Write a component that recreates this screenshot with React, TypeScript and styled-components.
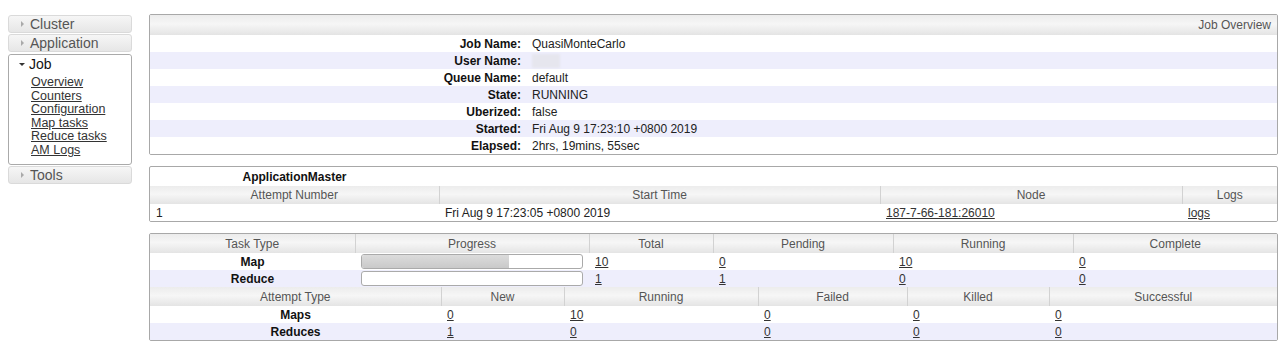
import React from "react";
import styled, { createGlobalStyle } from "styled-components";

const Global = createGlobalStyle`
  html, body { margin: 0; padding: 0; background: #fff; }
  body { font-family: "Liberation Sans", Arial, sans-serif; font-size: 12px; color: #222; }
`;

const Page = styled.div`
  display: flex;
  align-items: flex-start;
  padding: 14px 3px 0 8px;
  gap: 17px;
`;

const Nav = styled.nav`
  width: 124px;
  flex: none;
  display: flex;
  flex-direction: column;
  gap: 1px;
  margin-top: 1px;
`;

const NavHead = styled.div<{ $open?: boolean }>`
  height: 18px;
  box-sizing: border-box;
  border: 1px solid ${(p) => (p.$open ? "transparent" : "#dadada")};
  border-radius: 3px;
  background: ${(p) => (p.$open ? "#fff" : "linear-gradient(#f6f6f6, #e6e6e6)")};
  color: ${(p) => (p.$open ? "#111" : "#555")};
  font-size: 14px;
  line-height: 16px;
  display: flex;
  align-items: center;
  padding-left: ${(p) => (p.$open ? "8px" : "10px")};
  gap: ${(p) => (p.$open ? "4px" : "6px")};
`;

const Tri = styled.span<{ $down?: boolean }>`
  width: 0;
  height: 0;
  ${(p) =>
    p.$down
      ? `border-left: 3px solid transparent; border-right: 3px solid transparent; border-top: 3px solid #333; margin-left: 1px;`
      : `border-top: 3px solid transparent; border-bottom: 3px solid transparent; border-left: 3px solid #aaa; margin-left: 2px;`}
`;

const NavBox = styled.div`
  border: 1px solid #aaa;
  border-radius: 3px;
  padding-bottom: 6px;
  margin-top: 1px;
`;

const NavLinks = styled.ul`
  list-style: none;
  margin: 3px 0 0;
  padding: 0 0 0 22px;
  display: flex;
  flex-direction: column;
`;

const NavItem = styled.li`
  height: 13.6px;
  line-height: 13.6px;
`;

const NavLink = styled.a`
  color: #333;
  text-decoration: underline;
  font-size: 12.5px;
`;

const Main = styled.main`
  flex: 1;
  display: flex;
  flex-direction: column;
  gap: 11px;
`;

const Box = styled.div`
  border: 1px solid #a8a8a8;
  border-radius: 2px;
  overflow: hidden;
`;

const Table = styled.table`
  width: 100%;
  border-collapse: collapse;
  table-layout: fixed;
`;

const HeadCell = styled.th<{ $align?: string; $h?: number }>`
  height: ${(p) => p.$h || 18}px;
  padding: 0 6px;
  font-weight: normal;
  color: #555;
  text-align: ${(p) => p.$align || "center"};
  background: linear-gradient(#ececec, #f6f6f6 45%, #e4e4e4);
  border-left: 1px solid #d2d2d2;
  &:first-child { border-left: none; }
  white-space: nowrap;
`;

const Row = styled.tr<{ $alt?: boolean }>`
  background: ${(p) => (p.$alt ? "#eeeefc" : "#fff")};
`;

const Label = styled.th<{ $center?: boolean; $h?: number }>`
  height: ${(p) => p.$h || 17}px;
  padding: 0 5px;
  text-align: ${(p) => (p.$center ? "center" : "right")};
  font-weight: bold;
  color: #111;
  white-space: nowrap;
`;

const Cell = styled.td`
  height: 17px;
  padding: 0 6px;
  text-align: left;
  white-space: nowrap;
  color: #222;
`;

const Link = styled.a`
  color: #333;
  text-decoration: underline;
`;

const Blur = styled.span`
  display: inline-block;
  width: 28px;
  height: 14px;
  vertical-align: middle;
  background: #e6e6ee;
  filter: blur(1px);
`;

const Bar = styled.div`
  height: 15px;
  box-sizing: border-box;
  border: 1px solid #aaa;
  border-radius: 3px;
  background: #fff;
  overflow: hidden;
`;

const BarFill = styled.div`
  height: 100%;
  background: linear-gradient(#dcdcdc, #c9c9c9);
`;

const Cols = ({ widths }: { widths: number[] }) => (
  <colgroup>
    {widths.map((w, i) => (
      <col key={i} style={{ width: w }} />
    ))}
  </colgroup>
);

const overview: [string, React.ReactNode][] = [
  ["Job Name:", "QuasiMonteCarlo"],
  ["User Name:", <Blur />],
  ["Queue Name:", "default"],
  ["State:", "RUNNING"],
  ["Uberized:", "false"],
  ["Started:", "Fri Aug 9 17:23:10 +0800 2019"],
  ["Elapsed:", "2hrs, 19mins, 55sec"],
];

const tasks = [
  { name: "Map", progress: 66.7, total: "10", pending: "0", running: "10", complete: "0" },
  { name: "Reduce", progress: 0, total: "1", pending: "1", running: "0", complete: "0" },
];

const attempts = [
  { name: "Maps", v: ["0", "10", "0", "0", "0"] },
  { name: "Reduces", v: ["1", "0", "0", "0", "0"] },
];

export default function App() {
  return (
    <>
      <Global />
      <Page>
        <Nav>
          <NavHead><Tri />Cluster</NavHead>
          <NavHead><Tri />Application</NavHead>
          <NavBox>
            <NavHead $open><Tri $down />Job</NavHead>
            <NavLinks>
              {["Overview", "Counters", "Configuration", "Map tasks", "Reduce tasks", "AM Logs"].map((l) => (
                <NavItem key={l}><NavLink href="#">{l}</NavLink></NavItem>
              ))}
            </NavLinks>
          </NavBox>
          <NavHead><Tri />Tools</NavHead>
        </Nav>
        <Main>
          <Box>
            <Table>
              <Cols widths={[376, 751]} />
              <thead>
                <tr>
                  <HeadCell colSpan={2} $align="right" $h={20}>Job Overview</HeadCell>
                </tr>
              </thead>
              <tbody>
                {overview.map(([k, v], i) => (
                  <Row key={k} $alt={i % 2 === 1}>
                    <Label>{k}</Label>
                    <Cell>{v}</Cell>
                  </Row>
                ))}
              </tbody>
            </Table>
          </Box>
          <Box>
            <Table>
              <Cols widths={[289, 441, 302, 95]} />
              <thead>
                <tr>
                  <Label $center $h={19}>ApplicationMaster</Label>
                  <th />
                  <th />
                  <th />
                </tr>
                <tr>
                  <HeadCell>Attempt Number</HeadCell>
                  <HeadCell>Start Time</HeadCell>
                  <HeadCell>Node</HeadCell>
                  <HeadCell>Logs</HeadCell>
                </tr>
              </thead>
              <tbody>
                <Row>
                  <Cell>1</Cell>
                  <Cell>Fri Aug 9 17:23:05 +0800 2019</Cell>
                  <Cell><Link href="#">187-7-66-181:26010</Link></Cell>
                  <Cell><Link href="#">logs</Link></Cell>
                </Row>
              </tbody>
            </Table>
          </Box>
          <Box>
            <Table>
              <Cols widths={[205, 234, 124, 180, 180, 204]} />
              <thead>
                <tr>
                  {["Task Type", "Progress", "Total", "Pending", "Running", "Complete"].map((h) => (
                    <HeadCell key={h} $h={19}>{h}</HeadCell>
                  ))}
                </tr>
              </thead>
              <tbody>
                {tasks.map((t, i) => (
                  <Row key={t.name} $alt={i % 2 === 1}>
                    <Label $center>{t.name}</Label>
                    <Cell>
                      <Bar>
                        <BarFill style={{ width: `${t.progress}%` }} />
                      </Bar>
                    </Cell>
                    <Cell><Link href="#">{t.total}</Link></Cell>
                    <Cell><Link href="#">{t.pending}</Link></Cell>
                    <Cell><Link href="#">{t.running}</Link></Cell>
                    <Cell><Link href="#">{t.complete}</Link></Cell>
                  </Row>
                ))}
              </tbody>
            </Table>
            <Table>
              <Cols widths={[291, 123, 194, 149, 142, 228]} />
              <thead>
                <tr>
                  {["Attempt Type", "New", "Running", "Failed", "Killed", "Successful"].map((h) => (
                    <HeadCell key={h} $h={19}>{h}</HeadCell>
                  ))}
                </tr>
              </thead>
              <tbody>
                {attempts.map((a, i) => (
                  <Row key={a.name} $alt={i % 2 === 1}>
                    <Label $center>{a.name}</Label>
                    {a.v.map((v, j) => (
                      <Cell key={j}><Link href="#">{v}</Link></Cell>
                    ))}
                  </Row>
                ))}
              </tbody>
            </Table>
          </Box>
        </Main>
      </Page>
    </>
  );
}
